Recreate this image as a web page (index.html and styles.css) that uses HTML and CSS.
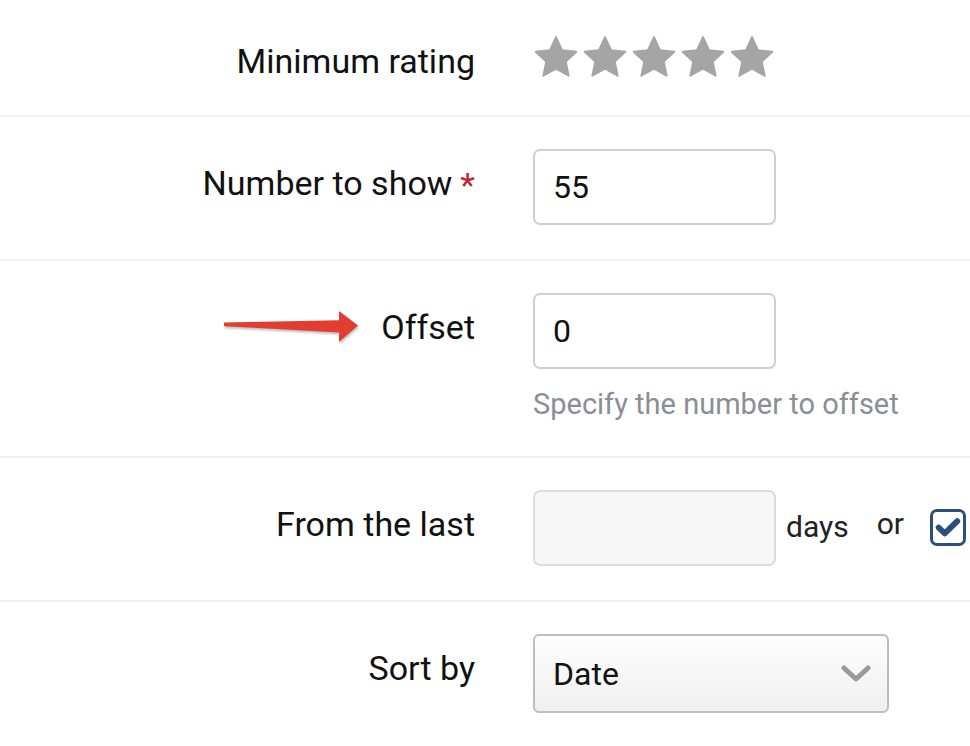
FILE: index.html
```html
<!DOCTYPE html>
<html lang="en">
<head>
<meta charset="UTF-8" />
<title>Widget settings</title>
<link rel="stylesheet" href="styles.css">
</head>
<body>

<div class="form">
  <div class="row row-first">
    <div class="label">Minimum rating</div>
    <div class="control">
      <div class="stars">
        <svg class="star" viewBox="0 0 24 24"><path d="M12 1.6l3.2 6.9 7.4.8-5.5 5.1 1.5 7.4L12 18.1l-6.6 3.7 1.5-7.4L1.4 9.3l7.4-.8z"/></svg>
        <svg class="star" viewBox="0 0 24 24"><path d="M12 1.6l3.2 6.9 7.4.8-5.5 5.1 1.5 7.4L12 18.1l-6.6 3.7 1.5-7.4L1.4 9.3l7.4-.8z"/></svg>
        <svg class="star" viewBox="0 0 24 24"><path d="M12 1.6l3.2 6.9 7.4.8-5.5 5.1 1.5 7.4L12 18.1l-6.6 3.7 1.5-7.4L1.4 9.3l7.4-.8z"/></svg>
        <svg class="star" viewBox="0 0 24 24"><path d="M12 1.6l3.2 6.9 7.4.8-5.5 5.1 1.5 7.4L12 18.1l-6.6 3.7 1.5-7.4L1.4 9.3l7.4-.8z"/></svg>
        <svg class="star" viewBox="0 0 24 24"><path d="M12 1.6l3.2 6.9 7.4.8-5.5 5.1 1.5 7.4L12 18.1l-6.6 3.7 1.5-7.4L1.4 9.3l7.4-.8z"/></svg>
      </div>
    </div>
  </div>

  <div class="row">
    <label class="label" for="number">Number to show <span class="required">*</span></label>
    <div class="control">
      <input type="text" id="number" class="field" value="55" />
    </div>
  </div>

  <div class="row">
    <label class="label" for="offset">
      <svg class="arrow" viewBox="0 0 136 32"><path d="M1 11.6L116 9.2V0l19 14.5L116 31v-9.6L1 15.2z"/></svg>
      Offset
    </label>
    <div class="control">
      <input type="text" id="offset" class="field" value="0" />
      <p class="help">Specify the number to offset</p>
    </div>
  </div>

  <div class="row">
    <label class="label" for="days">From the last</label>
    <div class="control inline">
      <input type="text" id="days" class="field field-off" disabled />
      <span class="word">days</span>
      <span class="word word-or">or</span>
      <span class="checkbox">
        <svg viewBox="0 0 24 24"><path d="M4 12.5l5.2 5 10.8-10.5"/></svg>
      </span>
    </div>
  </div>

  <div class="row">
    <label class="label" for="sort">Sort by</label>
    <div class="control">
      <div class="select" id="sort">
        <span>Date</span>
        <svg class="chevron" viewBox="0 0 30 18"><path d="M3 3l12 11 12-11"/></svg>
      </div>
    </div>
  </div>
</div>

</body>
</html>
```

FILE: styles.css
```css
body {
  margin: 0;
  background: #fff;
  font-family: Roboto, "Liberation Sans", Arial, sans-serif;
  color: #111;
}

.form {
  width: 970px;
}

.row {
  display: grid;
  grid-template-columns: 475px 1fr;
  column-gap: 58px;
  padding: 32px 0 34px;
  border-top: 2px solid #efefef;
}

.row-first {
  border-top: none;
  padding: 19px 0 20px;
}

.label {
  display: flex;
  justify-content: flex-end;
  align-items: center;
  height: 76px;
  font-size: 34px;
  line-height: 1;
  padding-bottom: 8px;
  box-sizing: border-box;
}

.row-first .label {
  padding-bottom: 0;
  padding-top: 8px;
}

.required {
  color: #c0232c;
  margin-left: 8px;
  align-self: flex-start;
  margin-top: 19px;
}

.arrow {
  width: 136px;
  height: 32px;
  margin-right: 22px;
  fill: #e23d30;
  filter: drop-shadow(1px 2px 1px rgba(0,0,0,0.25));
}

.control {
  min-width: 0;
}

.stars {
  display: flex;
  gap: 3px;
  height: 76px;
  align-items: center;
}

.star {
  width: 46px;
  height: 46px;
  fill: #a5a5a5;
  stroke: #a5a5a5;
  stroke-width: 1;
  stroke-linejoin: round;
}

.field {
  display: block;
  width: 243px;
  height: 76px;
  box-sizing: border-box;
  border: 2px solid #cfcfcf;
  border-radius: 7px;
  padding: 0 18px;
  font-family: inherit;
  font-size: 32px;
  color: #111;
  background: #fff;
  outline: none;
}

.field-off {
  background: #f7f7f7;
  border-color: #dcdcdc;
}

.help {
  margin: 18px 0 0;
  font-size: 29px;
  line-height: 35px;
  color: #8a8f95;
}

.inline {
  display: flex;
  align-items: center;
}

.word {
  font-size: 30px;
  color: #222;
  margin-left: 10px;
  padding-bottom: 4px;
}

.word-or {
  margin-left: 28px;
  padding-bottom: 10px;
}

.checkbox {
  display: flex;
  align-items: center;
  justify-content: center;
  width: 36px;
  height: 37px;
  box-sizing: border-box;
  margin-left: 26px;
  margin-bottom: 2px;
  border: 3px solid #2d4e7b;
  border-radius: 7px;
  background: #fff;
}

.checkbox svg {
  width: 28px;
  height: 28px;
  fill: none;
  stroke: #2d4e7b;
  stroke-width: 5;
  stroke-linecap: round;
  stroke-linejoin: round;
}

.select {
  display: flex;
  align-items: center;
  justify-content: space-between;
  width: 356px;
  height: 79px;
  box-sizing: border-box;
  padding: 0 16px 0 18px;
  border: 2px solid #bdbdbd;
  border-radius: 6px;
  background: linear-gradient(#fefefe, #efefef);
  font-size: 32px;
}

.chevron {
  width: 30px;
  height: 18px;
  fill: none;
  stroke: #999;
  stroke-width: 5;
  stroke-linecap: round;
  stroke-linejoin: round;
}
```
